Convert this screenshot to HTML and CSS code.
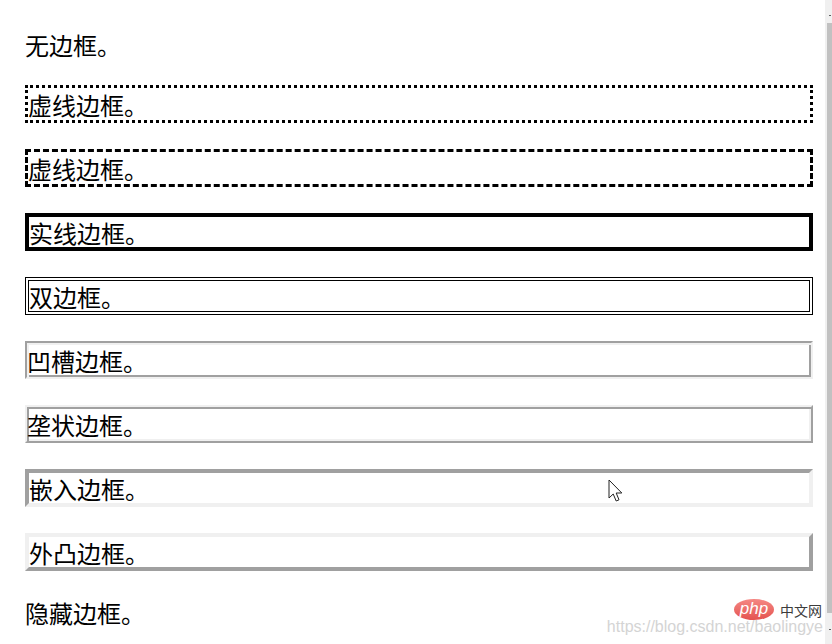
FILE: index.html
```html
<!DOCTYPE html>
<html lang="zh-CN">
<head>
<meta charset="utf-8">
<title>边框样式</title>
<link rel="stylesheet" href="styles.css">
</head>
<body>
<div class="page">
  <main class="content">
    <p class="none">无边框。</p>
    <p class="dotted">虚线边框。</p>
    <p class="dashed">虚线边框。</p>
    <p class="solid">实线边框。</p>
    <p class="double">双边框。</p>
    <p class="groove">凹槽边框。</p>
    <p class="ridge">垄状边框。</p>
    <p class="inset">嵌入边框。</p>
    <p class="outset">外凸边框。</p>
    <p class="hidden">隐藏边框。</p>
  </main>
  <div class="scrollbar">
    <div class="arrow arrow-up"></div>
    <div class="thumb"></div>
    <div class="arrow arrow-down"></div>
  </div>
</div>

<div class="watermark">
  <div class="wm-brand">
    <span class="wm-logo">php</span>
    <span class="wm-cn">中文网</span>
  </div>
  <div class="wm-url">https://blog.csdn.net/baolingye</div>
</div>

<svg class="cursor" width="16" height="24" viewBox="0 0 16 24">
  <path d="M1 1 L1 19 L5.2 15 L8.2 22 L11 20.8 L8.2 14 L13.8 14 Z" fill="#fff" stroke="#222" stroke-width="1" stroke-linejoin="round"/>
</svg>
</body>
</html>
```

FILE: styles.css
```css
html, body {
  margin: 0;
  padding: 0;
  height: 100%;
  overflow: hidden;
  background: #fff;
}

.page {
  display: flex;
  height: 644px;
}

.content {
  flex: 1;
  display: flex;
  flex-direction: column;
  gap: 26px;
  padding: 29px 12px 0 25px;
  font-family: "Noto Sans CJK SC", "Microsoft YaHei", sans-serif;
  font-size: 24px;
  color: #000;
}

.content p {
  margin: 0;
  height: 30px;
  line-height: 31px;
  white-space: nowrap;
}

.dotted {
  border: 3px dotted #000;
  padding: 1px 1px 1px 0;
}

.dashed {
  border: 3px dashed #000;
  padding: 1px 1px 1px 0;
}

.solid {
  border: 4px solid #000;
  margin-left: 0;
}

.double {
  border: 4px double #000;
}

.groove {
  border: 2px solid;
  border-color: #a0a0a0 #f0f0f0 #f0f0f0 #a0a0a0;
  box-shadow: inset 2px 2px 0 #f0f0f0, inset -2px -2px 0 #a0a0a0;
  padding: 2px 2px 2px 0;
}

.ridge {
  border: 2px solid;
  border-color: #f0f0f0 #a0a0a0 #a0a0a0 #f0f0f0;
  box-shadow: inset 2px 2px 0 #a0a0a0, inset -2px -2px 0 #f0f0f0;
  padding: 2px 2px 2px 0;
}

.inset {
  border: 4px solid;
  border-color: #a0a0a0 #f0f0f0 #f0f0f0 #a0a0a0;
}

.outset {
  border: 4px solid;
  border-color: #f0f0f0 #a0a0a0 #a0a0a0 #f0f0f0;
}

.hidden {
  border: 0 hidden;
}

.scrollbar {
  width: 7px;
  background: #f0f0f0;
  display: flex;
  flex-direction: column;
  align-items: flex-end;
}

.thumb {
  width: 5px;
  height: 590px;
  background: #c1c1c1;
}

.arrow {
  width: 2px;
  height: 1px;
  background: #606060;
  margin-right: 1px;
}

.arrow-up {
  margin-top: 15px;
  margin-bottom: 7px;
}

.arrow-down {
  margin-top: 16px;
}

.watermark {
  position: absolute;
  right: 9px;
  bottom: 9px;
  display: flex;
  flex-direction: column;
  align-items: flex-end;
  pointer-events: none;
}

.wm-brand {
  display: flex;
  align-items: center;
  gap: 6px;
  margin-right: 1px;
}

.wm-logo {
  display: inline-block;
  width: 40px;
  height: 21px;
  border-radius: 50%;
  background: linear-gradient(180deg, #f47b77, #e2413d);
  color: #fff;
  font-family: "Liberation Sans", Arial, sans-serif;
  font-style: italic;
  font-size: 17px;
  line-height: 19px;
  text-align: center;
  opacity: 0.9;
}

.wm-cn {
  font-family: "Noto Sans CJK SC", sans-serif;
  font-size: 14px;
  line-height: 18px;
  color: #3c3c3c;
}

.wm-url {
  font-family: "Liberation Sans", Arial, sans-serif;
  font-size: 16px;
  line-height: 17px;
  color: #d4d4d4;
  margin-top: -2px;
}

.cursor {
  position: absolute;
  left: 608px;
  top: 479px;
}
```
